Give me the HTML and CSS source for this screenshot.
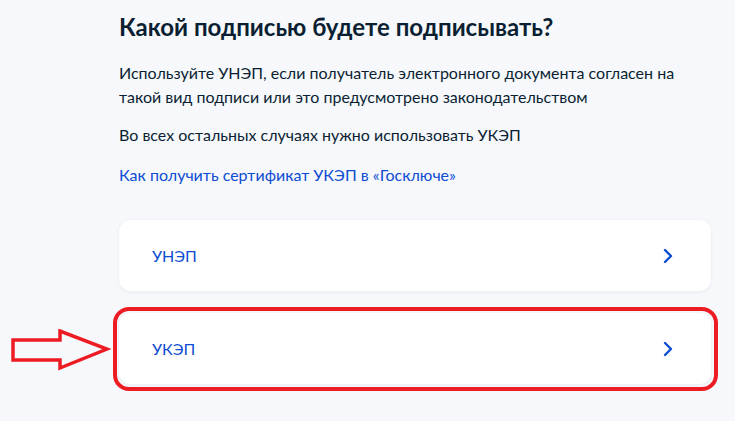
FILE: index.html
```html
<!DOCTYPE html>
<html lang="ru">
<head>
<meta charset="utf-8">
<link rel="stylesheet" href="styles.css">
</head>
<body>
<main class="page">
  <h1 class="title">Какой подписью будете подписывать?</h1>
  <p class="text">Используйте УНЭП, если получатель электронного документа согласен на такой вид подписи или это предусмотрено законодательством</p>
  <p class="text">Во всех остальных случаях нужно использовать УКЭП</p>
  <a class="link" href="#">Как получить сертификат УКЭП в «Госключе»</a>
  <div class="options">
    <div class="option">
      <span class="option-label">УНЭП</span>
      <svg class="chevron" width="10" height="16" viewBox="0 0 10 16"><path d="M2 2 L8 8 L2 14" fill="none" stroke="#0d4cd3" stroke-width="2.4" stroke-linecap="round" stroke-linejoin="round"/></svg>
    </div>
    <div class="option option-marked">
      <span class="option-label">УКЭП</span>
      <svg class="chevron" width="10" height="16" viewBox="0 0 10 16"><path d="M2 2 L8 8 L2 14" fill="none" stroke="#0d4cd3" stroke-width="2.4" stroke-linecap="round" stroke-linejoin="round"/></svg>
      <svg class="pointer" width="100" height="44" viewBox="0 0 100 44"><path d="M2 11 H49 V2 L96 20 L49 39 V31 H2 Z" fill="none" stroke="#ed1c24" stroke-width="3.5" stroke-linejoin="miter"/></svg>
    </div>
  </div>
</main>
</body>
</html>
```
FILE: styles.css
```css
* { box-sizing: border-box; }
html, body { margin: 0; padding: 0; }
body {
  background: #f6f8fb;
  font-family: Lato, "Noto Sans", sans-serif;
  color: #0b1f33;
  width: 735px;
  height: 421px;
  overflow: hidden;
}
.page {
  margin-left: 119px;
  width: 592px;
  padding-top: 9px;
  display: flex;
  flex-direction: column;
}
.title {
  margin: 0;
  font-size: 24px;
  line-height: 36px;
  font-weight: 700;
  color: #0b1f33;
}
.text {
  margin: 16px 0 0;
  font-size: 16px;
  line-height: 24px;
}
.text + .text { margin-top: 14px; }
.link {
  margin-top: 16px;
  font-size: 16px;
  line-height: 24px;
  color: #0d4cd3;
  text-decoration: none;
}
.options {
  margin-top: 33px;
  display: flex;
  flex-direction: column;
  gap: 22px;
}
.option {
  position: relative;
  height: 71px;
  background: #fff;
  border-radius: 12px;
  box-shadow: 0 1px 4px rgba(0, 30, 80, 0.06);
  display: flex;
  align-items: center;
  justify-content: space-between;
  padding: 0 38px 0 33px;
}
.option-label {
  font-size: 16px;
  color: #0d4cd3;
}
.option-marked::after {
  content: "";
  position: absolute;
  left: -6px;
  right: -7px;
  top: -6px;
  bottom: -7px;
  border: 4px solid #ed1c24;
  border-radius: 16px;
  pointer-events: none;
}
.pointer {
  position: absolute;
  left: -108px;
  top: 16px;
}
```
